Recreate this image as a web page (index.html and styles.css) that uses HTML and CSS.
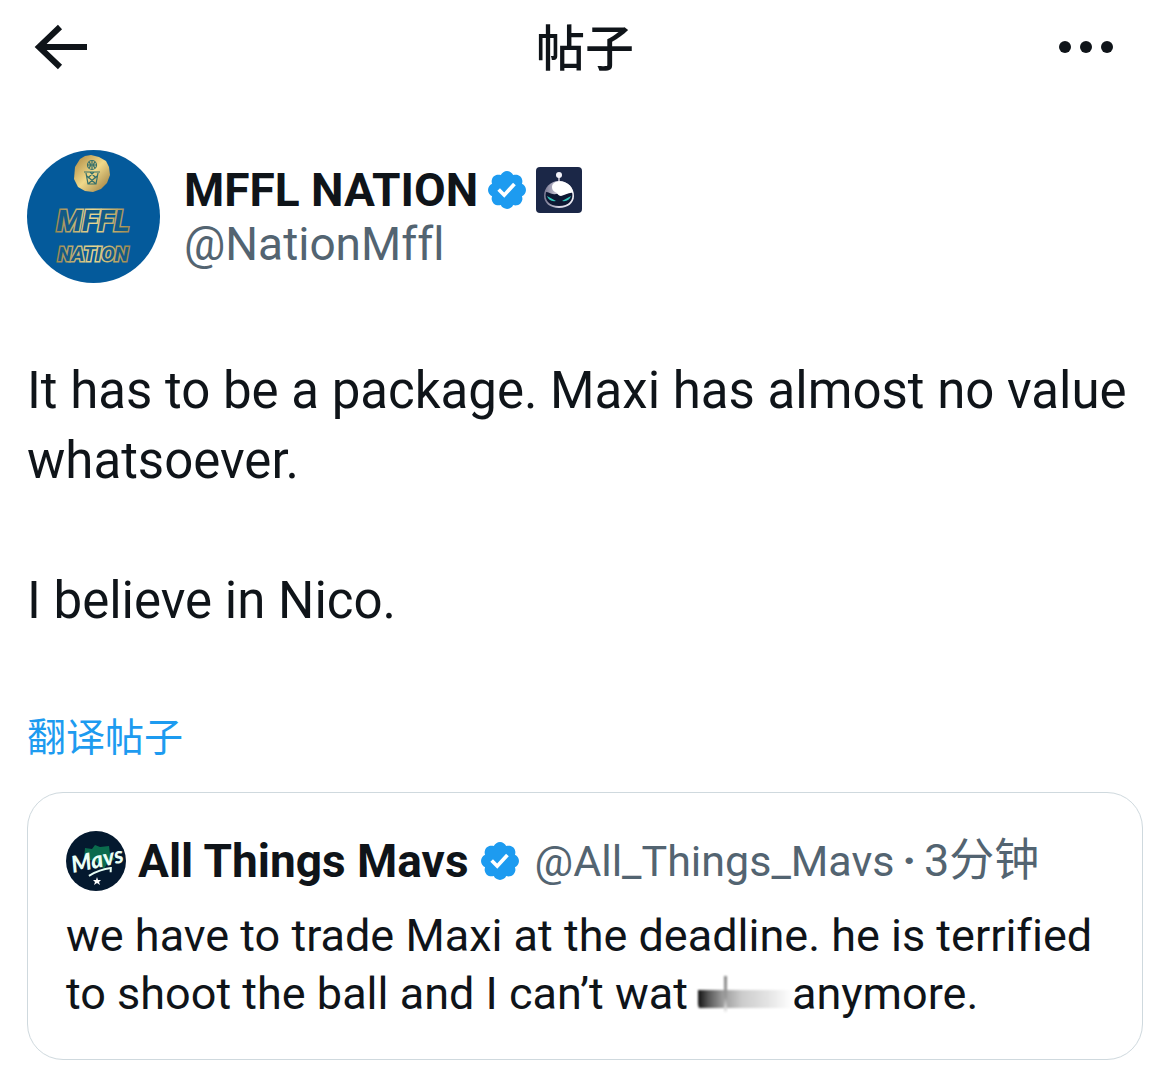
FILE: index.html
```html
<!DOCTYPE html>
<html lang="zh-CN">
    <head>
        <meta charset="utf-8">
        <meta name="viewport" content="width=device-width, initial-scale=1">
        <title>帖子</title>
        <link rel="stylesheet" href="styles.css">
    </head>
    <body>
        <!-- shared verified badge -->
        <svg class="sprite" aria-hidden="true">
            <symbol id="verified" viewBox="1.6 1.6 18.8 18.8">
                <path fill="#1d9bf0" d="M20.396 11c-.018-.646-.215-1.275-.57-1.816-.354-.54-.852-.972-1.438-1.246.223-.607.27-1.264.14-1.897-.131-.634-.437-1.218-.882-1.687-.47-.445-1.053-.75-1.687-.882-.633-.13-1.29-.083-1.897.14-.273-.587-.704-1.086-1.245-1.44S11.647 1.62 11 1.604c-.646.017-1.273.213-1.813.568s-.969.854-1.24 1.44c-.608-.223-1.267-.272-1.902-.14-.635.13-1.22.436-1.69.882-.445.47-.749 1.055-.878 1.688-.13.633-.08 1.29.144 1.896-.587.274-1.087.705-1.443 1.245-.356.54-.555 1.17-.574 1.817.02.647.218 1.276.574 1.817.356.54.856.972 1.443 1.245-.224.606-.274 1.263-.144 1.896.13.634.433 1.218.877 1.688.47.443 1.054.747 1.687.878.633.132 1.29.084 1.897-.136.274.586.705 1.084 1.246 1.439.54.354 1.17.551 1.816.569.647-.016 1.276-.213 1.817-.567s.972-.854 1.245-1.44c.604.239 1.266.296 1.903.164.636-.132 1.22-.447 1.68-.907.46-.46.776-1.044.908-1.681s.075-1.299-.165-1.903c.586-.274 1.084-.705 1.439-1.246.354-.54.551-1.17.569-1.816zM9.662 14.85l-3.429-3.428 1.293-1.302 2.072 2.072 4.4-4.794 1.347 1.246z"/>
            </symbol>
        </svg>

        <header class="topbar">
            <button class="icon-button" type="button" aria-label="返回">
                <svg width="54" height="46" viewBox="0 0 54 46">
                    <path d="M26 3L5 23l21 20M5 23h48" fill="none" stroke="#0f1419" stroke-width="6"/>
                </svg>
            </button>
            <h1 class="title">帖子</h1>
            <button class="icon-button more" type="button" aria-label="更多">
                <svg width="54" height="46" viewBox="0 0 54 46" fill="#0f1419">
                    <circle cx="6" cy="23" r="6"/>
                    <circle cx="27" cy="23" r="6"/>
                    <circle cx="48" cy="23" r="6"/>
                </svg>
            </button>
        </header>

        <main class="post">
            <div class="author">
                <svg class="avatar" viewBox="0 0 133 133" aria-hidden="true">
                    <defs>
                        <linearGradient id="gold" x1="0" y1="0" x2="1" y2="1">
                            <stop offset="0" stop-color="#a8843e"/>
                            <stop offset=".5" stop-color="#f0d98a"/>
                            <stop offset="1" stop-color="#94743a"/>
                        </linearGradient>
                        <linearGradient id="gold-text" x1="0" y1="0" x2="1" y2="0">
                            <stop offset="0" stop-color="#9c8a55"/>
                            <stop offset=".5" stop-color="#e8d994"/>
                            <stop offset="1" stop-color="#a08a4f"/>
                        </linearGradient>
                    </defs>
                    <circle cx="66.5" cy="66.5" r="66.5" fill="#045a9b"/>
                    <path d="M58 6l6-1 8 2 7 4 3 6 1 8-3 8-6 6-8 3-8-1-7-4-4-8 1-12 5-8z" fill="url(#gold)"/>
                    <g fill="none" stroke="#35706b" stroke-width="1.2">
                        <circle cx="65" cy="15" r="4.5"/>
                        <path d="M61 15h8M65 11v8M62 12q3 3 0 6M68 12q-3 3 0 6"/>
                        <path d="M57 22h16M59 23l2 11h8l2-11M60 26l9 8M70 26l-9 8M63 22l6 6M67 22l-6 6"/>
                    </g>
                    <g class="avatar-text" fill="#125a87" stroke="url(#gold-text)" stroke-width="3">
                        <text x="66" y="81" font-size="30">MFFL</text>
                        <text x="66" y="111" font-size="20">NATION</text>
                    </g>
                </svg>
                <div class="author-info">
                    <div class="name-row">
                        <span class="name">MFFL NATION</span>
                        <svg class="badge" role="img" aria-label="认证账号"><use href="#verified"/></svg>
                        <svg class="affiliate" viewBox="0 0 46 46" aria-hidden="true">
                            <defs>
                                <linearGradient id="helmet" x1="0" y1="0" x2="1" y2="0">
                                    <stop offset="0" stop-color="#77758f"/>
                                    <stop offset=".5" stop-color="#d5d3e2"/>
                                    <stop offset="1" stop-color="#f1f0f7"/>
                                </linearGradient>
                            </defs>
                            <rect width="46" height="46" rx="4" fill="#1b2747"/>
                            <path d="M23 8v8" stroke="#a9a8ba" stroke-width="2"/>
                            <circle cx="23" cy="8" r="3" fill="#f4f3fa"/>
                            <path d="M23 14c9 0 15 7 15 15 0 7-6 12-15 12S8 36 8 29c0-8 6-15 15-15z" fill="url(#helmet)"/>
                            <path d="M10 25c3 0 5 3 10 2 6 0 9-3 16-2 2 8-3 14-13 14S8 33 10 25z" fill="#0e1733"/>
                            <path d="M16 20c0-5 7-7 12-5 6 2 9 7 9 11-4-1-7 2-12 3-3 0-3-3-6-4-2-1-3-3-3-5z" fill="#fff"/>
                            <path d="M11 29l9 5q-7 1-9-5zM35 29l-9 5q7 1 9-5z" fill="#35c9bd"/>
                        </svg>
                    </div>
                    <a class="handle" href="#">@NationMffl</a>
                </div>
            </div>

            <div class="post-text">
                <p>It has to be a package. Maxi has almost no value whatsoever.</p>
                <p>I believe in Nico.</p>
            </div>

            <a class="translate" href="#">翻译帖子</a>

            <article class="quote">
                <div class="quote-head">
                    <svg class="quote-avatar" viewBox="0 0 60 60" aria-hidden="true">
                        <circle cx="30" cy="30" r="30" fill="#04192f"/>
                        <path d="M19 17l7 1 3-4 5 2 9-1 1 8 5 5-8 5-3 5-9-8-11-2z" fill="#0a6b4d"/>
                        <g transform="rotate(-12 30 30)">
                            <text class="mavs" x="5" y="37" font-size="23">Mavs</text>
                            <path d="M20 43q12-4 23-3l-1 4" fill="none" stroke="#e9fff6" stroke-width="2"/>
                        </g>
                        <path d="M31 46l1 3h3l-2 2 1 3-3-2-3 2 1-3-2-2h3z" fill="#fff"/>
                    </svg>
                    <span class="name">All Things Mavs</span>
                    <svg class="badge" role="img" aria-label="认证账号"><use href="#verified"/></svg>
                    <div class="quote-meta">
                        <a class="quote-handle" href="#">@All_Things_Mavs</a>
                        <b>·</b>
                        <time>3分钟</time>
                    </div>
                </div>
                <p class="quote-text">we have to trade Maxi at the deadline. he is terrified to shoot the ball and I can’t wat<span class="smudge"></span>anymore.</p>
            </article>
        </main>
    </body>
</html>
```

FILE: styles.css
```css
* {
    box-sizing: border-box;
}

body {
    margin: 0;
    background: #fff;
    color: #0f1419;
    font-family: Roboto, "Noto Sans CJK SC", sans-serif;
    font-variant-ligatures: none;
}

h1,
p {
    margin: 0;
}

a {
    text-decoration: none;
}

.sprite {
    display: none;
}

.topbar {
    display: grid;
    grid-template-columns: 1fr auto 1fr;
    align-items: center;
    height: 94px;
    padding: 0 34px;
}

.icon-button {
    display: flex;
    justify-self: start;
    padding: 0;
    border: 0;
    background: none;
    cursor: pointer;
}

.more {
    justify-self: end;
    margin-right: 23px;
}

.title {
    padding-top: 5px;
    font-size: 49px;
    font-weight: 500;
    line-height: 72px;
}

.post {
    padding: 56px 27px 28px;
}

.author {
    display: flex;
    align-items: center;
    gap: 24px;
}

.avatar {
    flex: none;
    width: 133px;
    height: 133px;
}

.avatar-text {
    font-family: Roboto, sans-serif;
    font-style: italic;
    font-weight: 700;
    text-anchor: middle;
    paint-order: stroke;
}

.name-row {
    display: flex;
    align-items: center;
    gap: 10px;
}

.name {
    font-size: 46px;
    font-weight: 700;
    line-height: 54px;
}

.badge {
    flex: none;
    width: 38px;
    height: 38px;
}

.affiliate {
    flex: none;
    width: 46px;
    height: 46px;
}

.handle {
    display: block;
    color: #536471;
    font-size: 46px;
    line-height: 54px;
}

.post-text {
    display: grid;
    gap: 70px;
    margin-top: 73px;
    font-size: 51px;
    line-height: 70px;
}

.translate {
    display: block;
    width: max-content;
    margin-top: 73px;
    color: #1d9bf0;
    font-size: 39px;
    line-height: 58px;
}

.quote {
    margin-top: 25px;
    padding: 38px 38px 36px;
    border: 1px solid #cfd9de;
    border-radius: 36px;
}

.quote-head {
    display: flex;
    align-items: center;
    gap: 12px;
}

.quote-avatar {
    flex: none;
    width: 60px;
    height: 60px;
}

.mavs {
    fill: #e9fff6;
    font-family: Lato, sans-serif;
    font-style: italic;
    font-weight: 900;
}

.quote-meta {
    display: flex;
    align-items: baseline;
    gap: 8px;
    padding-left: 4px;
    color: #536471;
    font-size: 45px;
    line-height: 54px;
    white-space: nowrap;
}

.quote-handle {
    color: inherit;
    font-size: 43px;
}

.quote-text {
    margin-top: 16px;
    font-size: 45px;
    line-height: 58px;
}

/* smeared letters */
.smudge {
    display: inline-block;
    width: 94px;
    height: 36px;
    margin-left: 10px;
    background:
        linear-gradient(#888, #999 60%, #eee) 26px 0 / 3px 36px no-repeat,
        linear-gradient(90deg, #111 0, #555 10px, #999 24px, #ccc 44px, #e4e4e4 70px, #fff) 0 14px / 94px 18px no-repeat;
    border-radius: 8px 0 0 8px;
    vertical-align: -3px;
    filter: blur(1px);
}
```
